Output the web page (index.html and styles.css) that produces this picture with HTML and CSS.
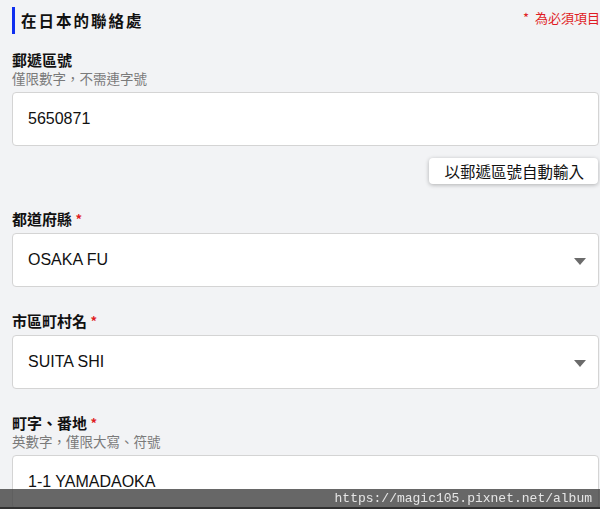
FILE: index.html
```html
<!DOCTYPE html>
<html lang="zh-Hant">
<head>
<meta charset="utf-8">
<link rel="stylesheet" href="styles.css">
</head>
<body>
<div class="page">
  <div class="head">
    <h2 class="title">在日本的聯絡處</h2>
    <span class="req-note">*&nbsp; 為必須項目</span>
  </div>

  <div class="field first">
    <div class="label">郵遞區號</div>
    <div class="hint">僅限數字，不需連字號</div>
    <div class="box">5650871</div>
  </div>
  <div class="btn-row">
    <button class="btn">以郵遞區號自動輸入</button>
  </div>

  <div class="field after-btn">
    <div class="label">都道府縣 <span class="star">*</span></div>
    <div class="box select">OSAKA FU<span class="caret"></span></div>
  </div>

  <div class="field">
    <div class="label">市區町村名 <span class="star">*</span></div>
    <div class="box select">SUITA SHI<span class="caret"></span></div>
  </div>

  <div class="field">
    <div class="label">町字、番地 <span class="star">*</span></div>
    <div class="hint">英數字，僅限大寫、符號</div>
    <div class="box">1-1 YAMADAOKA</div>
  </div>
</div>
<div class="watermark">https://magic105.pixnet.net/album</div>
</body>
</html>
```

FILE: styles.css
```css
html, body {
  margin: 0;
  padding: 0;
  background: #f2f3f5;
  height: 509px;
  overflow: hidden;
}
body {
  font-family: "Noto Sans CJK TC", "Liberation Sans", sans-serif;
  color: #111;
}
.page {
  padding: 7px 1px 0 12px;
}
.head {
  display: flex;
  justify-content: space-between;
  align-items: flex-start;
  height: 27px;
}
.title {
  margin: 0;
  height: 27px;
  border-left: 3px solid #0f2ff0;
  padding-left: 6px;
  font-size: 15.5px;
  letter-spacing: 2px;
  font-weight: 700;
  line-height: 27px;
}
.req-note {
  color: #e01b24;
  font-size: 13px;
  line-height: 20px;
  margin-top: 1px;
  margin-right: -1px;
  white-space: nowrap;
}
.field {
  margin-top: 25px;
}
.field.after-btn {
  margin-top: 26px;
}
.field.first {
  margin-top: 17px;
}
.label {
  font-size: 15px;
  font-weight: 700;
  line-height: 18px;
  margin-bottom: 5px;
}
.label + .hint {
  margin-top: -5px;
  margin-bottom: 5px;
}
.star {
  color: #e01b24;
  font-size: 13px;
  vertical-align: 1px;
}
.hint {
  font-size: 13.5px;
  line-height: 18px;
  height: 18px;
  color: #7a7a7a;
}
.box {
  position: relative;
  height: 52px;
  box-sizing: content-box;
  background: #fff;
  border: 1px solid #d4d4d4;
  border-radius: 4px;
  padding-left: 15px;
  font-family: "Liberation Sans", Arial, sans-serif;
  font-size: 16px;
  line-height: 52px;
  color: #111;
}
.caret {
  position: absolute;
  right: 12px;
  top: 24px;
  width: 0;
  height: 0;
  border-left: 6px solid transparent;
  border-right: 6px solid transparent;
  border-top: 7px solid #6b6b6b;
}
.btn-row {
  display: flex;
  justify-content: flex-end;
  margin-top: 12px;
  padding-right: 1px;
}
.btn {
  height: 26px;
  padding: 0 14px 0 15px;
  background: #fff;
  border: none;
  border-radius: 4px;
  box-shadow: 0 1px 4px rgba(0, 0, 0, 0.28);
  font-family: "Noto Sans CJK TC", sans-serif;
  font-size: 15.5px;
  line-height: 26px;
  color: #111;
}
.watermark {
  position: fixed;
  left: 0;
  right: 0;
  bottom: 0;
  height: 18px;
  border-bottom: 2px solid rgba(40, 40, 40, 0.85);
  background: rgba(70, 70, 70, 0.82);
  color: #e6e6e6;
  font-family: "Liberation Mono", monospace;
  font-size: 13px;
  line-height: 19px;
  text-align: right;
  padding-right: 8px;
}
```
